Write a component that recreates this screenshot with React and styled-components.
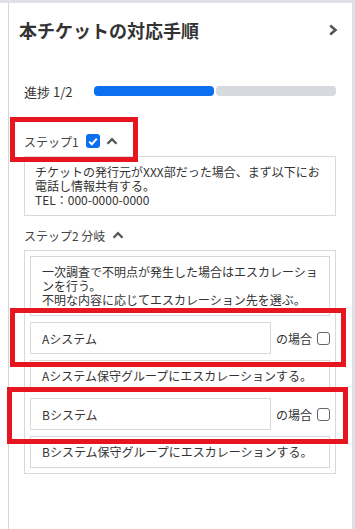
import React from 'react';
import styled, { createGlobalStyle } from 'styled-components';

const GlobalStyle = createGlobalStyle`
  html, body {
    margin: 0;
    padding: 0;
    height: 100%;
    background: #e0e1e6;
  }
  body {
    font-family: "Noto Sans CJK JP", "Noto Sans", sans-serif;
    color: #333;
  }
  #root { height: 100%; }
  * { box-sizing: border-box; }
`;

const branches = [
  { name: 'Aシステム', result: 'Aシステム保守グループにエスカレーションする。', box: { top: -14, bottom: -13, left: -20, right: -16 } },
  { name: 'Bシステム', result: 'Bシステム保守グループにエスカレーションする。', box: { top: -11, bottom: -14, left: -23, right: -18 } },
];

const ChevronRight = () => (
  <svg width="10" height="12" viewBox="0 0 10 12">
    <polyline points="2.2,1.5 7.5,6 2.2,10.5" fill="none" stroke="#555" strokeWidth="2.6" />
  </svg>
);

const ChevronUp = () => (
  <svg width="12" height="8" viewBox="0 0 12 8">
    <polyline points="1.5,6.8 6,2.2 10.5,6.8" fill="none" stroke="#555" strokeWidth="2.3" />
  </svg>
);

const App = () => {
  return (
    <Page>
      <GlobalStyle />
      <Stub />
      <Panel>
        <TitleRow>
          <Title>本チケットの対応手順</Title>
          <ChevronRight />
        </TitleRow>

        <Body>
          <ProgressRow>
            <ProgressLabel>進捗 1/2</ProgressLabel>
            <Bar>
              <Segment $done />
              <Segment />
            </Bar>
          </ProgressRow>

          <StepHeader $first>
            <StepLabel>ステップ1</StepLabel>
            <CheckedBox>
              <svg width="10" height="9" viewBox="0 0 10 9">
                <polyline points="1.2,4.6 3.8,7.2 8.8,1.6" fill="none" stroke="#fff" strokeWidth="2" />
              </svg>
            </CheckedBox>
            <ChevronUp />
            <Highlight $top={-14} $bottom={-11} $left={-14} $right={-20} />
          </StepHeader>
          <StepBox>
            チケットの発行元がXXX部だった場合、まず以下にお電話し情報共有する。
            <br />
            TEL：000-0000-0000
          </StepBox>

          <StepHeader>
            <StepLabel>ステップ2 分岐</StepLabel>
            <ChevronUp />
          </StepHeader>
          <BranchBox>
            <NoteBox>
              一次調査で不明点が発生した場合はエスカレーションを行う。
              <br />
              不明な内容に応じてエスカレーション先を選ぶ。
            </NoteBox>
            {branches.map((b) => (
              <React.Fragment key={b.name}>
                <ConditionRow>
                  <ConditionInput readOnly value={b.name} />
                  <CaseText>の場合</CaseText>
                  <EmptyBox />
                  <Highlight $top={b.box.top} $bottom={b.box.bottom} $left={b.box.left} $right={b.box.right} />
                </ConditionRow>
                <NoteBox>{b.result}</NoteBox>
              </React.Fragment>
            ))}
          </BranchBox>
        </Body>
      </Panel>
    </Page>
  );
};

export default App;

const Page = styled.div`
  display: flex;
  height: 100vh;
  padding-top: 3px;
  padding-right: 3px;
`;

const Stub = styled.div`
  width: 8px;
  background: #fff;
`;

const Panel = styled.div`
  flex: 1;
  background: #fff;
  border-left: 1px solid #d6d6d6;
`;

const TitleRow = styled.div`
  height: 54px;
  display: flex;
  align-items: center;
  justify-content: space-between;
  padding: 0 14px 0 10px;
`;

const Title = styled.h2`
  margin: 0;
  font-size: 18px;
  font-weight: 700;
  color: #333;
`;

const Body = styled.div`
  padding: 0 16px 0 15px;
`;

const ProgressRow = styled.div`
  display: flex;
  align-items: center;
  justify-content: space-between;
  height: 20px;
  margin-top: 24px;
`;

const ProgressLabel = styled.span`
  font-size: 13px;
  color: #333;
`;

const Bar = styled.div`
  display: flex;
  gap: 2px;
  width: 242px;
`;

const Segment = styled.div`
  flex: 1;
  height: 10px;
  border-radius: 4px;
  background: ${(p) => (p.$done ? '#0b6ff0' : '#d6d9dd')};
`;

const StepHeader = styled.div`
  position: relative;
  display: flex;
  align-items: center;
  gap: 6px;
  width: fit-content;
  height: 20px;
  margin-top: ${(p) => (p.$first ? '30px' : '9px')};
  margin-bottom: 5px;
`;

const StepLabel = styled.span`
  font-size: 12px;
  color: #444;
  margin-right: 1px;
`;

const CheckedBox = styled.span`
  width: 14px;
  height: 14px;
  border-radius: 3px;
  background: #0b6ff0;
  display: flex;
  align-items: center;
  justify-content: center;
`;

const EmptyBox = styled.span`
  width: 13px;
  height: 13px;
  border: 1.5px solid #666;
  border-radius: 3px;
  background: #fff;
  flex-shrink: 0;
`;

const Highlight = styled.div`
  position: absolute;
  top: ${(p) => p.$top}px;
  bottom: ${(p) => p.$bottom}px;
  left: ${(p) => p.$left}px;
  right: ${(p) => p.$right}px;
  border: 5px solid #e5161f;
  pointer-events: none;
  z-index: 1;
`;

const StepBox = styled.div`
  border: 1px solid #d9d9d9;
  padding: 8px 10px;
  font-size: 12px;
  line-height: 14px;
  color: #333;
`;

const BranchBox = styled.div`
  border: 1px solid #d9d9d9;
  padding: 5px;
  display: flex;
  flex-direction: column;
  gap: 6px;
`;

const NoteBox = styled.div`
  border: 1px solid #d9d9d9;
  padding: 8px 11px;
  font-size: 12px;
  line-height: 14px;
  color: #333;
`;

const ConditionRow = styled.div`
  position: relative;
  display: flex;
  align-items: center;
  gap: 5px;
  height: 32px;
`;

const ConditionInput = styled.input`
  flex: 1;
  min-width: 0;
  height: 32px;
  border: 1px solid #d9d9d9;
  border-radius: 0;
  padding: 0 11px;
  font-family: inherit;
  font-size: 12px;
  color: #333;
  outline: none;
`;

const CaseText = styled.span`
  font-size: 12px;
  color: #333;
`;
